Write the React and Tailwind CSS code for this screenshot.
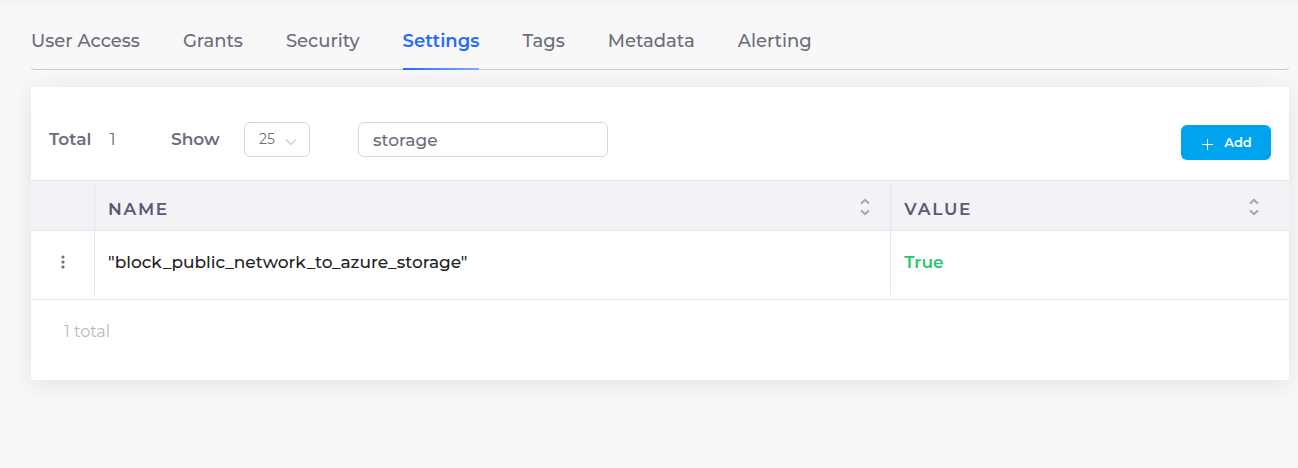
const tabs = ["User Access", "Grants", "Security", "Settings", "Tags", "Metadata", "Alerting"];

function SortIcon() {
  return (
    <svg className="h-5 w-[10px] shrink-0" viewBox="0 0 10 20" fill="none" stroke="#a8a5b5" strokeWidth="2" aria-hidden="true">
      <path d="M1 6.5 5 2.9 9 6.5M1 13.5l4 3.6 4-3.6" />
    </svg>
  );
}

function HeaderCell({ label, className }) {
  return (
    <th scope="col" className={"border-l border-[#e6e5f0] pt-2 pl-[13px] text-left font-semibold " + className}>
      <button type="button" className="flex w-full items-start justify-between uppercase">
        <span className="tracking-widest">{label}</span>
        <SortIcon />
      </button>
    </th>
  );
}

export default function App() {
  return (
    <div className="min-h-screen bg-[#f8f8f8] font-['Montserrat','Inter',sans-serif] text-[17px] text-[#6e6b7b]">
      <div className="h-3 bg-linear-to-b from-[#f3f3f3] to-[#f8f8f8]" />
      <div className="pr-[9px] pl-[31px]">
        <nav className="flex h-[58px] gap-[43px] rounded-b-sm border-b border-[#c9c9cd]">
          {tabs.map((tab) => (
            <a
              key={tab}
              href="#"
              aria-current={tab === "Settings" ? "page" : undefined}
              className={
                tab === "Settings"
                  ? "relative pt-4 text-[18px] leading-[26px] font-semibold text-[#246bf8]"
                  : "pt-4 text-[18px] leading-[26px] font-medium"
              }
            >
              {tab}
              {tab === "Settings" && (
                <span className="absolute inset-x-0 -bottom-px h-0.5 bg-linear-to-r from-[#246bf8] to-[#80a8fa]" />
              )}
            </a>
          ))}
        </nav>

        <main className="mt-[17px] rounded-[3px] bg-white shadow-[0_4px_24px_rgba(34,41,47,0.1)]">
          <div className="flex h-[93px] items-center justify-between pt-3 pr-[18px] pl-[18px]">
            <div className="flex items-center">
              <div className="flex w-[122px] gap-[18px]">
                <span className="font-semibold">Total</span>
                <span>1</span>
              </div>
              <label htmlFor="page-size" className="w-[73px] font-semibold">Show</label>
              <div className="relative">
                <select
                  id="page-size"
                  defaultValue="25"
                  className="h-[35px] w-[66px] appearance-none rounded-md border border-[#d8d6de] bg-white pb-0.5 pl-[14px] text-sm"
                >
                  <option>25</option>
                  <option>50</option>
                  <option>100</option>
                </select>
                <svg className="pointer-events-none absolute top-4 right-[13px] h-2 w-3" viewBox="0 0 12 8" fill="none" stroke="#d2cfdb" strokeWidth="1.5" aria-hidden="true">
                  <path d="m1 1.5 5 5 5-5" />
                </svg>
              </div>
              <input
                type="text"
                aria-label="Search settings"
                defaultValue="storage"
                className="ml-12 h-[35px] w-[250px] rounded-md border border-[#d8d6de] bg-white px-3.5 font-medium outline-none"
              />
            </div>
            <button type="button" className="mt-1.5 flex h-[35px] w-[90px] items-center justify-center gap-[11px] rounded-md bg-[#00a3ee] pl-0.5 text-[13px] font-semibold text-white">
              <svg className="mt-1 h-[11px] w-[11px]" viewBox="0 0 11 11" stroke="currentColor" strokeWidth="1" aria-hidden="true">
                <path d="M5.5 0v11M0 5.5h11" />
              </svg>
              Add
            </button>
          </div>

          <div className="border-b border-[#e8e7ed] pb-1">
            <table className="w-full table-fixed border-separate border-spacing-0">
              <thead className="text-[#5e5873]">
                <tr className="h-[51px] bg-[#f3f2f7] *:border-y *:border-y-[#e8e7f1]">
                  <th scope="col" className="w-[63px]" aria-label="Actions" />
                  <HeaderCell label="Name" className="w-[63.3%] pr-5" />
                  <HeaderCell label="Value" className="pr-[30px]" />
                </tr>
              </thead>
              <tbody>
                <tr className="h-16">
                  <td className="text-center">
                    <button type="button" aria-label="Row actions" className="inline-flex pb-1 align-middle">
                      <svg className="h-[14px] w-1" viewBox="0 0 4 14" fill="#6e6b7b" aria-hidden="true">
                        <circle cx="2" cy="2" r="1.6" />
                        <circle cx="2" cy="7" r="1.6" />
                        <circle cx="2" cy="12" r="1.6" />
                      </svg>
                    </button>
                  </td>
                  <td className="border-l border-[#e6e5f0] pl-[13px] font-medium text-[#222222]">
                    "block_public_network_to_azure_storage"
                  </td>
                  <td className="border-l border-[#e6e5f0] pl-[13px] font-semibold text-[#28c76f]">True</td>
                </tr>
              </tbody>
            </table>
          </div>
          <div className="flex h-20 items-start px-[33px] pt-5 text-base text-[#b9b9c3]">1 total</div>
        </main>
      </div>
    </div>
  );
}
